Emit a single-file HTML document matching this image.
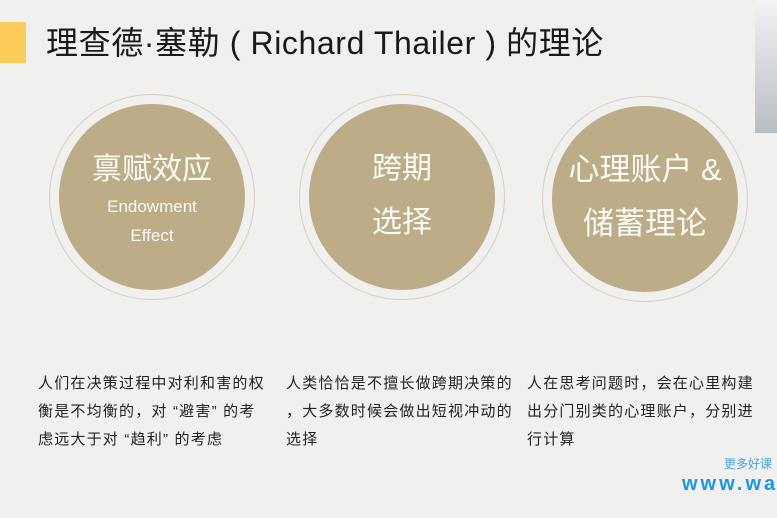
<!DOCTYPE html>
<html><head><meta charset="utf-8"><style>
body{margin:0;width:777px;height:518px;background:#f0f0ee;position:relative;overflow:hidden;font-family:"Liberation Sans","Noto Sans CJK SC",sans-serif;}
.bar{position:absolute;left:0;top:22px;width:26px;height:41px;background:#fbcb57;}
.title{position:absolute;left:46px;top:20px;font-size:32px;color:#1a1a1a;white-space:nowrap;line-height:46px;letter-spacing:0.6px}
.grad{position:absolute;left:755px;top:0;width:22px;height:133px;background:linear-gradient(#f2f3f4,#b9bdc3);}
.c{position:absolute;border-radius:50%;}
.o{width:206px;height:206px;border:1px solid #d9cfb9;box-sizing:border-box;}
.i{width:186px;height:186px;background:#bcac87;color:#fff;text-align:center;}
.t{position:absolute;left:0;width:100%;text-align:center;color:#fbfaf5;white-space:nowrap}
.p{position:absolute;top:370px;font-size:15px;line-height:28px;color:#222;letter-spacing:1.2px;white-space:nowrap}
</style></head><body>
<div class="bar"></div>
<div class="title">理查德·塞勒 ( Richard Thailer ) 的理论</div>
<div class="grad"></div>

<div class="c o" style="left:49px;top:94px"></div>
<div class="c i" style="left:59px;top:104px">
<div class="t" style="top:40px;font-size:30px">禀赋效应</div>
<div class="t" style="top:93px;font-size:17px">Endowment</div>
<div class="t" style="top:122px;font-size:17px">Effect</div>
</div>

<div class="c o" style="left:299px;top:94px"></div>
<div class="c i" style="left:309px;top:104px">
<div class="t" style="top:39px;font-size:30px">跨期</div>
<div class="t" style="top:93px;font-size:30px">选择</div>
</div>

<div class="c o" style="left:542px;top:96px"></div>
<div class="c i" style="left:552px;top:106px">
<div class="t" style="top:38px;font-size:31px">心理账户 &amp;</div>
<div class="t" style="top:92px;font-size:31px">储蓄理论</div>
</div>

<div class="p" style="left:38px">人们在决策过程中对利和害的权<br>衡是不均衡的，对 “避害” 的考<br>虑远大于对 “趋利” 的考虑</div>
<div class="p" style="left:286px">人类恰恰是不擅长做跨期决策的<br>，大多数时候会做出短视冲动的<br>选择</div>
<div class="p" style="left:527px">人在思考问题时，会在心里构建<br>出分门别类的心理账户，分别进<br>行计算</div>

<div style="position:absolute;left:724px;top:455px;font-size:12px;color:#4aa3e0;white-space:nowrap">更多好课</div>
<div style="position:absolute;left:682px;top:473px;font-size:20px;font-weight:bold;color:#2196e0;letter-spacing:3px;white-space:nowrap">www.wa</div>
</body></html>
